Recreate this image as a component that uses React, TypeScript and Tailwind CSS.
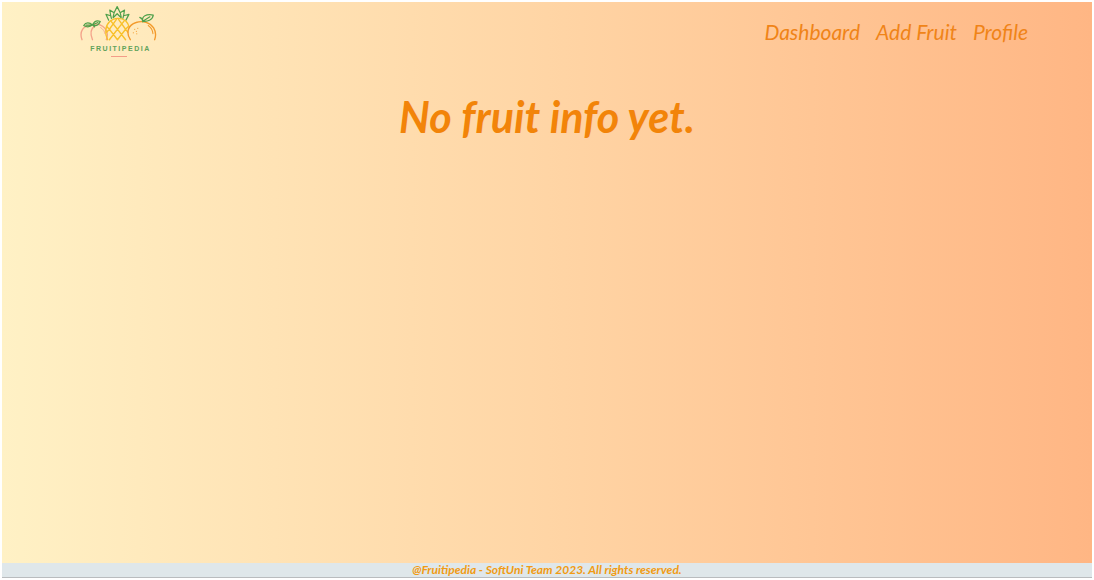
const links = ["Dashboard", "Add Fruit", "Profile"];

function Logo() {
  return (
    <a href="#" aria-label="Fruitipedia home" className="flex flex-col items-center">
      <svg
        viewBox="32 12 228 111"
        className="h-[38px] w-[77px]"
        fill="none"
        strokeLinecap="round"
        strokeLinejoin="round"
        strokeWidth="4"
        aria-hidden="true"
      >
        <g stroke="#f4a38a">
          <path d="M38 117C29 94 42 73 65 75C75 68 89 71 99 77C111 86 116 101 110 117" />
          <path d="M69 117C61 99 65 84 76 76" />
          <path d="M93 81C101 86 105 92 106 99" strokeWidth="2.5" />
        </g>
        <g stroke="#4fa04a" strokeWidth="3.5">
          <path d="M43 75C49 64 61 66 69 73C61 80 51 80 43 75ZM50 74L68 73M69 73C75 61 83 59 92 63C87 74 78 77 69 73ZM71 72L85 66M69 73L75 79" />
          <path d="M117 59L109 42L123 46L120 29L133 37L142 19L151 37L164 29L161 46L177 42L168 59M125 54L123 46M133 37L130 50M151 37L154 50M161 46L159 54M130 52L142 40L154 52" />
        </g>
        <g stroke="#f8c02a">
          <path d="M114 117C104 98 107 75 120 63C133 51 155 51 167 61C173 67 176 73 178 80" />
          <path d="M111 78L119 86L143 117M123 61L143 86L167 117M146 57L167 86L174 95M175 78L167 86L143 117M163 61L143 86L119 117M140 57L119 86L111 95" />
        </g>
        <g stroke="#f39a2b">
          <path d="M181 117C167 96 175 73 198 66C218 59 240 66 250 82C258 95 257 106 253 117" />
          <path d="M234 75C243 81 247 89 248 99" strokeWidth="3" />
          <path d="M194 86V87M203 83V84M199 92V93M190 96V97M200 99V100" strokeWidth="2.5" />
        </g>
        <path
          d="M218 64C218 57 215 53 209 51M218 62C214 48 228 40 249 44C247 59 231 64 218 62ZM218 62L239 49"
          stroke="#4fa04a"
          strokeWidth="3.5"
        />
      </svg>
      <span className="pl-1 font-['Liberation_Sans'] text-[7px] leading-[14px] font-bold tracking-[1.5px] text-[#62a35b]">
        FRUITIPEDIA
      </span>
      <span className="h-px w-4 bg-[#f39c88]" />
    </a>
  );
}

export default function App() {
  return (
    <div className="min-h-screen bg-white p-0.5 font-['Lato',sans-serif]">
      <div className="flex min-h-[calc(100vh-4px)] flex-col bg-linear-to-r from-[#fff1c5] via-[#ffd5a5] to-[#ffb684]">
        <header className="flex items-start justify-between pt-0.5 pr-16 pl-[78px]">
          <Logo />
          <nav className="flex gap-4 pt-3 text-[21px] leading-8 text-[#f08418] italic">
            {links.map((label) => (
              <a key={label} href="#">
                {label}
              </a>
            ))}
          </nav>
        </header>
        <main className="flex-1 pt-8 text-center">
          <h1 className="text-[43px] leading-14 font-bold text-[#f28409] italic">No fruit info yet.</h1>
        </main>
        <footer className="border-b border-[#b9bcbe] bg-[#dfe7ea] text-center text-xs leading-[14px] font-bold text-[#f19b13] italic">
          @Fruitipedia - SoftUni Team 2023. All rights reserved.
        </footer>
      </div>
    </div>
  );
}
